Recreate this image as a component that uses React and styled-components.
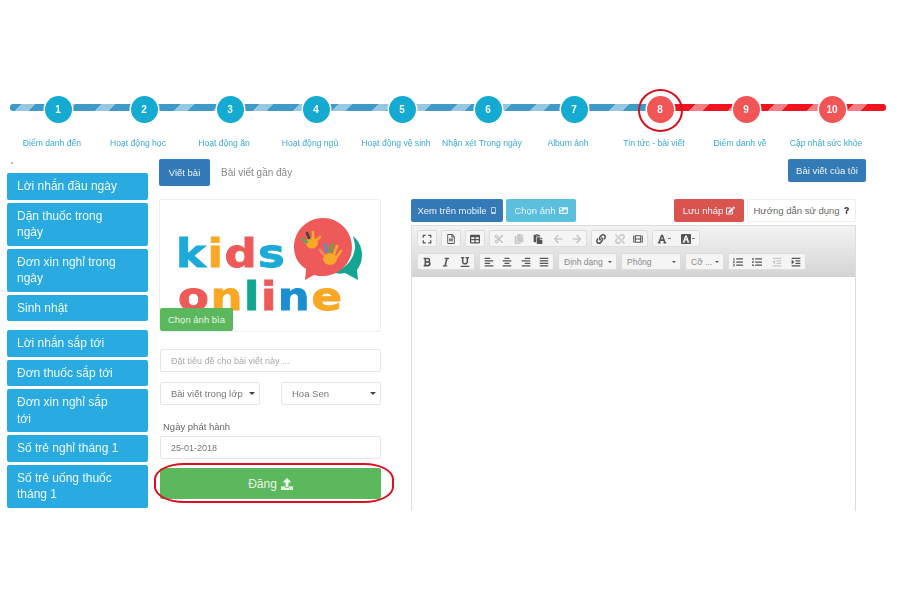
import React from "react";
import styled, { createGlobalStyle } from "styled-components";
import {
  FaExpand, FaRegFileAlt, FaTable, FaCut, FaCopy, FaPaste, FaArrowLeft, FaArrowRight,
  FaLink, FaUnlink, FaFilm, FaFont, FaBold, FaItalic, FaUnderline, FaAlignLeft,
  FaAlignCenter, FaAlignRight, FaAlignJustify, FaListOl, FaListUl, FaOutdent, FaIndent,
  FaUpload, FaEdit, FaImage, FaMobileAlt, FaQuestion,
} from "react-icons/fa";

const GlobalStyle = createGlobalStyle`
  html, body { margin: 0; padding: 0; background: #fff; }
  body { font-family: "Liberation Sans", Arial, sans-serif; }
  * { box-sizing: border-box; }
`;

const steps = [
  { label: "Điểm danh đến" },
  { label: "Hoạt động học" },
  { label: "Hoạt động ăn" },
  { label: "Hoạt động ngủ" },
  { label: "Hoạt động vệ sinh" },
  { label: "Nhận xét Trong ngày" },
  { label: "Album ảnh" },
  { label: "Tin tức - bài viết", red: true, ring: true },
  { label: "Điểm danh về", red: true },
  { label: "Cập nhật sức khỏe", red: true },
];

const groupOne = ["Lời nhắn đầu ngày", "Dặn thuốc trong ngày", "Đơn xin nghỉ trong ngày", "Sinh nhật"];
const groupTwo = [
  "Lời nhắn sắp tới", "Đơn thuốc sắp tới", "Đơn xin nghỉ sắp tới",
  "Số trẻ nghỉ tháng 1", "Số trẻ uống thuốc tháng 1", "",
];

const Finger = ({ d, c }) => <path d={d} stroke={c} strokeWidth="2.6" strokeLinecap="round" fill="none" />;

const Logo = () => (
  <LogoWrap>
    <LogoBubble width="76" height="66" viewBox="0 0 76 66">
      <path d="M62 18c6 5 9 12 9 19 0 6-2 11-5 15l1 10-13-7c-4 1-8 1-12-1 13-3 21-13 22-24 0-4-1-8-2-12z" fill="#12a58f" />
      <path d="M32 0c16 0 29 13 29 29S48 58 32 58c-3 0-6 0-9-1L14 62l1-11C7 46 3 38 3 29 3 13 16 0 32 0z" fill="#ee5a5a" />
      <ellipse cx="21" cy="25" rx="6" ry="5.5" fill="#f9a825" />
      <Finger d="M16 24l-5-3" c="#4caf50" />
      <Finger d="M18 20l-2-5" c="#37474f" />
      <Finger d="M22 19l0-5" c="#f9a825" />
      <Finger d="M26 22l3-3" c="#f9a825" />
      <ellipse cx="39" cy="41" rx="7" ry="6" fill="#f9a825" />
      <Finger d="M33 37l-4-5" c="#ee8a5a" />
      <Finger d="M36 34l-2-7" c="#2aa6d0" />
      <Finger d="M40 34l1-8" c="#4caf50" />
      <Finger d="M43 36l3-8" c="#f9a825" />
      <Finger d="M45 40l5-7" c="#f9a825" />
    </LogoBubble>
    <LogoLine>
      <Letter $c="#1cabd8">k</Letter><Letter $c="#f9a825">i</Letter><Letter $c="#ee5a5a">d</Letter><Letter $c="#1cabd8">s</Letter>
    </LogoLine>
    <LogoLine $shift={2}>
      <Letter $c="#ee5a5a">o</Letter><Letter $c="#f9a825">n</Letter><Letter $c="#12a58f">l</Letter><Letter $c="#ee5a5a">i</Letter><Letter $c="#1c8fd0">n</Letter><Letter $c="#f9a825">e</Letter>
    </LogoLine>
  </LogoWrap>
);

const App = () => (
  <>
    <GlobalStyle />
    <Frame>
      <Stepper>
        <Track />
        {steps.map((s, i) => (
          <Step key={s.label}>
            <Circle $red={s.red} $ring={s.ring}>{i + 1}</Circle>
            <StepLabel>{s.label}</StepLabel>
          </Step>
        ))}
      </Stepper>

      <Content>
        <Sidebar>
          <MenuGroup>
            {groupOne.map((m) => <MenuItem key={m}>{m}</MenuItem>)}
          </MenuGroup>
          <MenuGroup>
            {groupTwo.map((m) => <MenuItem key={m}>{m}</MenuItem>)}
          </MenuGroup>
        </Sidebar>

        <Main>
          <TopBar>
            <Tabs>
              <Btn $bg="#337ab7" $w={51} $h={27}>Viết bài</Btn>
              <TabLink>Bài viết gần đây</TabLink>
            </Tabs>
            <Btn $bg="#337ab7" $w={78} $h={23}>Bài viết của tôi</Btn>
          </TopBar>

          <Columns>
            <FormColumn>
              <CoverCard>
                <Logo />
                <CoverButton>Chọn ảnh bìa</CoverButton>
              </CoverCard>
              <Field>Đặt tiêu đề cho bài viết này ...</Field>
              <SelectRow>
                <Select $w={100}>Bài viết trong lớp</Select>
                <Select $w={100}>Hoa Sen</Select>
              </SelectRow>
              <FieldLabel>Ngày phát hành</FieldLabel>
              <Field $dark>25-01-2018</Field>
              <SubmitWrap>
                <Submit>Đăng <FaUpload size={12} /></Submit>
              </SubmitWrap>
            </FormColumn>

            <EditorColumn>
              <ActionBar>
                <ActionGroup>
                  <Btn $bg="#337ab7" $w={92} $h={23}>Xem trên mobile <FaMobileAlt size={7} /></Btn>
                  <Btn $bg="#5bc0de" $w={70} $h={23}>Chọn ảnh <FaImage size={9} /></Btn>
                </ActionGroup>
                <ActionGroup>
                  <Btn $bg="#d9534f" $w={70} $h={23}>Lưu nháp <FaEdit size={9} /></Btn>
                  <Btn $bg="#fff" $fg="#666" $w={109} $h={23} $border>Hướng dẫn sử dụng <FaQuestion size={7} color="#444" /></Btn>
                </ActionGroup>
              </ActionBar>
              <Editor>
                <Toolbar>
                  <ToolRow>
                    <ToolGroup $w={20}><Tool><FaExpand /></Tool></ToolGroup>
                    <ToolGroup $w={20}><Tool><FaRegFileAlt /></Tool></ToolGroup>
                    <ToolGroup $w={20}><Tool><FaTable /></Tool></ToolGroup>
                    <ToolGroup $w={98}>
                      <Tool $off><FaCut /></Tool><Tool $off><FaCopy /></Tool><Tool><FaPaste /></Tool>
                      <Tool $off><FaArrowLeft /></Tool><Tool $off><FaArrowRight /></Tool>
                    </ToolGroup>
                    <ToolGroup $w={57}>
                      <Tool><FaLink /></Tool><Tool $off><FaUnlink /></Tool><Tool><FaFilm /></Tool>
                    </ToolGroup>
                    <ToolGroup $w={48}>
                      <Tool><FaFont /><Caret /></Tool><Tool><Swatch><FaFont /></Swatch><Caret /></Tool>
                    </ToolGroup>
                  </ToolRow>
                  <ToolRow>
                    <ToolGroup $w={58}>
                      <Tool><FaBold /></Tool><Tool><FaItalic /></Tool><Tool><FaUnderline /></Tool>
                    </ToolGroup>
                    <ToolGroup $w={75}>
                      <Tool><FaAlignLeft /></Tool><Tool><FaAlignCenter /></Tool><Tool><FaAlignRight /></Tool><Tool><FaAlignJustify /></Tool>
                    </ToolGroup>
                    <ToolSelect $w={59}>Định dạng</ToolSelect>
                    <ToolSelect $w={60}>Phông</ToolSelect>
                    <ToolSelect $w={39}>Cỡ ...</ToolSelect>
                    <ToolGroup $w={78}>
                      <Tool><FaListOl /></Tool><Tool><FaListUl /></Tool><Tool $off><FaOutdent /></Tool><Tool><FaIndent /></Tool>
                    </ToolGroup>
                  </ToolRow>
                </Toolbar>
              </Editor>
            </EditorColumn>
          </Columns>
        </Main>
      </Content>
    </Frame>
  </>
);

const Frame = styled.div`
  width: 900px;
  height: 511px;
  overflow: hidden;
  padding-top: 95px;
  filter: blur(0.6px);
`;

const Stepper = styled.div`
  position: relative;
  display: flex;
  width: 876px;
  height: 64px;
  margin-left: 10px;
  padding-left: 5px;
`;

const Track = styled.div`
  position: absolute;
  left: 0;
  right: 0;
  top: 9px;
  height: 7px;
  border-radius: 3px;
  background:
    repeating-linear-gradient(-45deg, transparent 0 18px, rgba(255, 255, 255, 0.45) 18px 28px) 0 0 / 100% 100%,
    linear-gradient(90deg, #3f9ac8 0 649px, #f0141e 649px);
`;

const Step = styled.div`
  position: relative;
  width: 86px;
  display: flex;
  flex-direction: column;
  align-items: center;
`;

const Circle = styled.div`
  position: relative;
  width: 27px;
  height: 27px;
  margin-top: 1px;
  border-radius: 50%;
  background: ${(p) => (p.$red ? "#f25555" : "#14aad2")};
  color: #f4fbfd;
  font-size: 10px;
  font-weight: 700;
  display: flex;
  align-items: center;
  justify-content: center;
  box-shadow: 0 0 0 1.5px #fff;

  ${(p) => p.$ring && `
    &::after {
      content: "";
      position: absolute;
      inset: -7px -9px -9px -9px;
      border: 2px solid #d5101c;
      border-radius: 50%;
    }
  `}
`;

const StepLabel = styled.div`
  width: 100px;
  margin-top: 14px;
  margin-left: -12px;
  font-size: 8.6px;
  line-height: 12px;
  color: #3aa9cf;
  white-space: nowrap;
  text-align: center;
`;

const Content = styled.div`
  display: flex;
  margin-left: 7px;
`;

const Sidebar = styled.div`
  position: relative;
  width: 141px;
  padding-top: 14px;
  display: flex;
  flex-direction: column;
  gap: 9px;

  &::before {
    content: "";
    position: absolute;
    left: 4px;
    top: 3px;
    width: 2px;
    height: 2px;
    background: #bbb;
  }
`;

const MenuGroup = styled.div`
  display: flex;
  flex-direction: column;
  gap: 3px;
`;

const MenuItem = styled.div`
  background: #29abe2;
  color: #eef8fd;
  border-radius: 2px;
  padding: 5px 26px 5px 10px;
  font-size: 12px;
  line-height: 16.5px;
  min-height: 26px;
`;

const Main = styled.div`
  width: 707px;
  margin-left: 11px;
`;

const TopBar = styled.div`
  display: flex;
  justify-content: space-between;
  align-items: flex-start;
  height: 40px;
`;

const Tabs = styled.div`
  display: flex;
  align-items: center;
  gap: 11px;
`;

const TabLink = styled.div`
  font-size: 10px;
  color: #888;
`;

const Btn = styled.div`
  width: ${(p) => p.$w}px;
  height: ${(p) => p.$h}px;
  background: ${(p) => p.$bg};
  color: ${(p) => p.$fg || "#eaf2f8"};
  border: 1px solid ${(p) => (p.$border ? "#eee" : "transparent")};
  border-radius: 2px;
  font-size: 9.5px;
  display: flex;
  align-items: center;
  justify-content: center;
  gap: 3px;
  white-space: nowrap;
`;

const Columns = styled.div`
  display: flex;
  gap: 30px;
`;

const FormColumn = styled.div`
  width: 222px;
  display: flex;
  flex-direction: column;
`;

const CoverCard = styled.div`
  position: relative;
  height: 133px;
  border: 1px solid #eee;
  border-radius: 2px;
  overflow: hidden;
`;

const CoverButton = styled.div`
  position: absolute;
  left: 0;
  bottom: 0;
  width: 73px;
  height: 23px;
  background: #5cb85c;
  color: #e6f5e6;
  border-radius: 2px;
  font-size: 9.5px;
  display: flex;
  align-items: center;
  justify-content: center;
`;

const LogoWrap = styled.div`
  position: relative;
  padding: 31px 0 0 16px;
`;

const LogoBubble = styled.svg`
  position: absolute;
  left: 131px;
  top: 18px;
`;

const LogoLine = styled.div`
  position: relative;
  height: 43px;
  margin-left: ${(p) => p.$shift || 0}px;
  font-family: "DejaVu Sans", sans-serif;
  font-weight: 700;
  font-size: 45px;
  line-height: 43px;
  letter-spacing: 1.5px;
  white-space: nowrap;
  transform: scaleY(0.86);
  transform-origin: 0 32px;
`;

const Letter = styled.span`
  color: ${(p) => p.$c};
  -webkit-text-stroke: 1px ${(p) => p.$c};
`;

const Field = styled.div`
  height: 23px;
  margin-left: 1px;
  margin-top: ${(p) => (p.$dark ? "3px" : "17px")};
  padding-left: 10px;
  border: 1px solid #e6e6e6;
  border-radius: 2px;
  font-size: 9px;
  color: ${(p) => (p.$dark ? "#777" : "#aaa")};
  display: flex;
  align-items: center;
`;

const SelectRow = styled.div`
  display: flex;
  justify-content: space-between;
  margin: 10px 0 0 1px;
`;

const Select = styled.div`
  position: relative;
  width: ${(p) => p.$w}px;
  height: 23px;
  padding-left: 10px;
  border: 1px solid #e6e6e6;
  border-radius: 2px;
  font-size: 9.5px;
  color: #777;
  display: flex;
  align-items: center;
  white-space: nowrap;

  &::after {
    content: "";
    position: absolute;
    right: 4px;
    top: 9px;
    border: 3px solid transparent;
    border-top: 3.5px solid #444;
    border-bottom: 0;
  }
`;

const FieldLabel = styled.div`
  margin: 15px 0 0 4px;
  font-size: 9.5px;
  line-height: 13px;
  color: #666;
`;

const SubmitWrap = styled.div`
  position: relative;
  margin: 9px 0 0 1px;

  &::after {
    content: "";
    position: absolute;
    inset: -5px -13px -4px -6px;
    border: 2px solid #dc1020;
    border-radius: 30px / 16px;
  }
`;

const Submit = styled.div`
  height: 31px;
  background: #5cb85c;
  color: #e8f6e8;
  border-radius: 2px;
  font-size: 12px;
  display: flex;
  align-items: center;
  justify-content: center;
  gap: 4px;
`;

const EditorColumn = styled.div`
  width: 445px;
  display: flex;
  flex-direction: column;
`;

const ActionBar = styled.div`
  display: flex;
  justify-content: space-between;
`;

const ActionGroup = styled.div`
  display: flex;
  gap: 3px;
`;

const Editor = styled.div`
  margin-top: 3px;
  height: 300px;
  border: 1px solid #ddd;
`;

const Toolbar = styled.div`
  height: 51px;
  padding: 4px 0 0 5px;
  background: linear-gradient(#f3f3f3, #d4d4d4);
  display: flex;
  flex-direction: column;
  gap: 6px;
`;

const ToolRow = styled.div`
  display: flex;
  gap: 4px;
  height: 17px;
`;

const ToolGroup = styled.div`
  width: ${(p) => p.$w}px;
  padding: 0 4px;
  background: #f5f5f5;
  border: 1px solid #ddd;
  border-radius: 2px;
  display: flex;
  align-items: center;
  justify-content: space-between;
`;

const Tool = styled.span`
  display: inline-flex;
  align-items: center;
  gap: 1px;
  font-size: 10px;
  color: ${(p) => (p.$off ? "#c8c8c8" : "#555")};
`;

const Swatch = styled.span`
  display: inline-flex;
  padding: 1px;
  font-size: 8px;
  color: #fff;
  background: #555;
  border-radius: 1px;
`;

const Caret = styled.i`
  width: 3px;
  height: 1px;
  background: #777;
`;

const ToolSelect = styled.div`
  position: relative;
  width: ${(p) => p.$w}px;
  padding-left: 5px;
  background: #f5f5f5;
  border: 1px solid #ddd;
  border-radius: 2px;
  font-size: 8.5px;
  color: #888;
  display: flex;
  align-items: center;
  white-space: nowrap;

  &::after {
    content: "";
    position: absolute;
    right: 4px;
    top: 7px;
    border: 2px solid transparent;
    border-top: 2.5px solid #555;
    border-bottom: 0;
  }
`;

export default App;
